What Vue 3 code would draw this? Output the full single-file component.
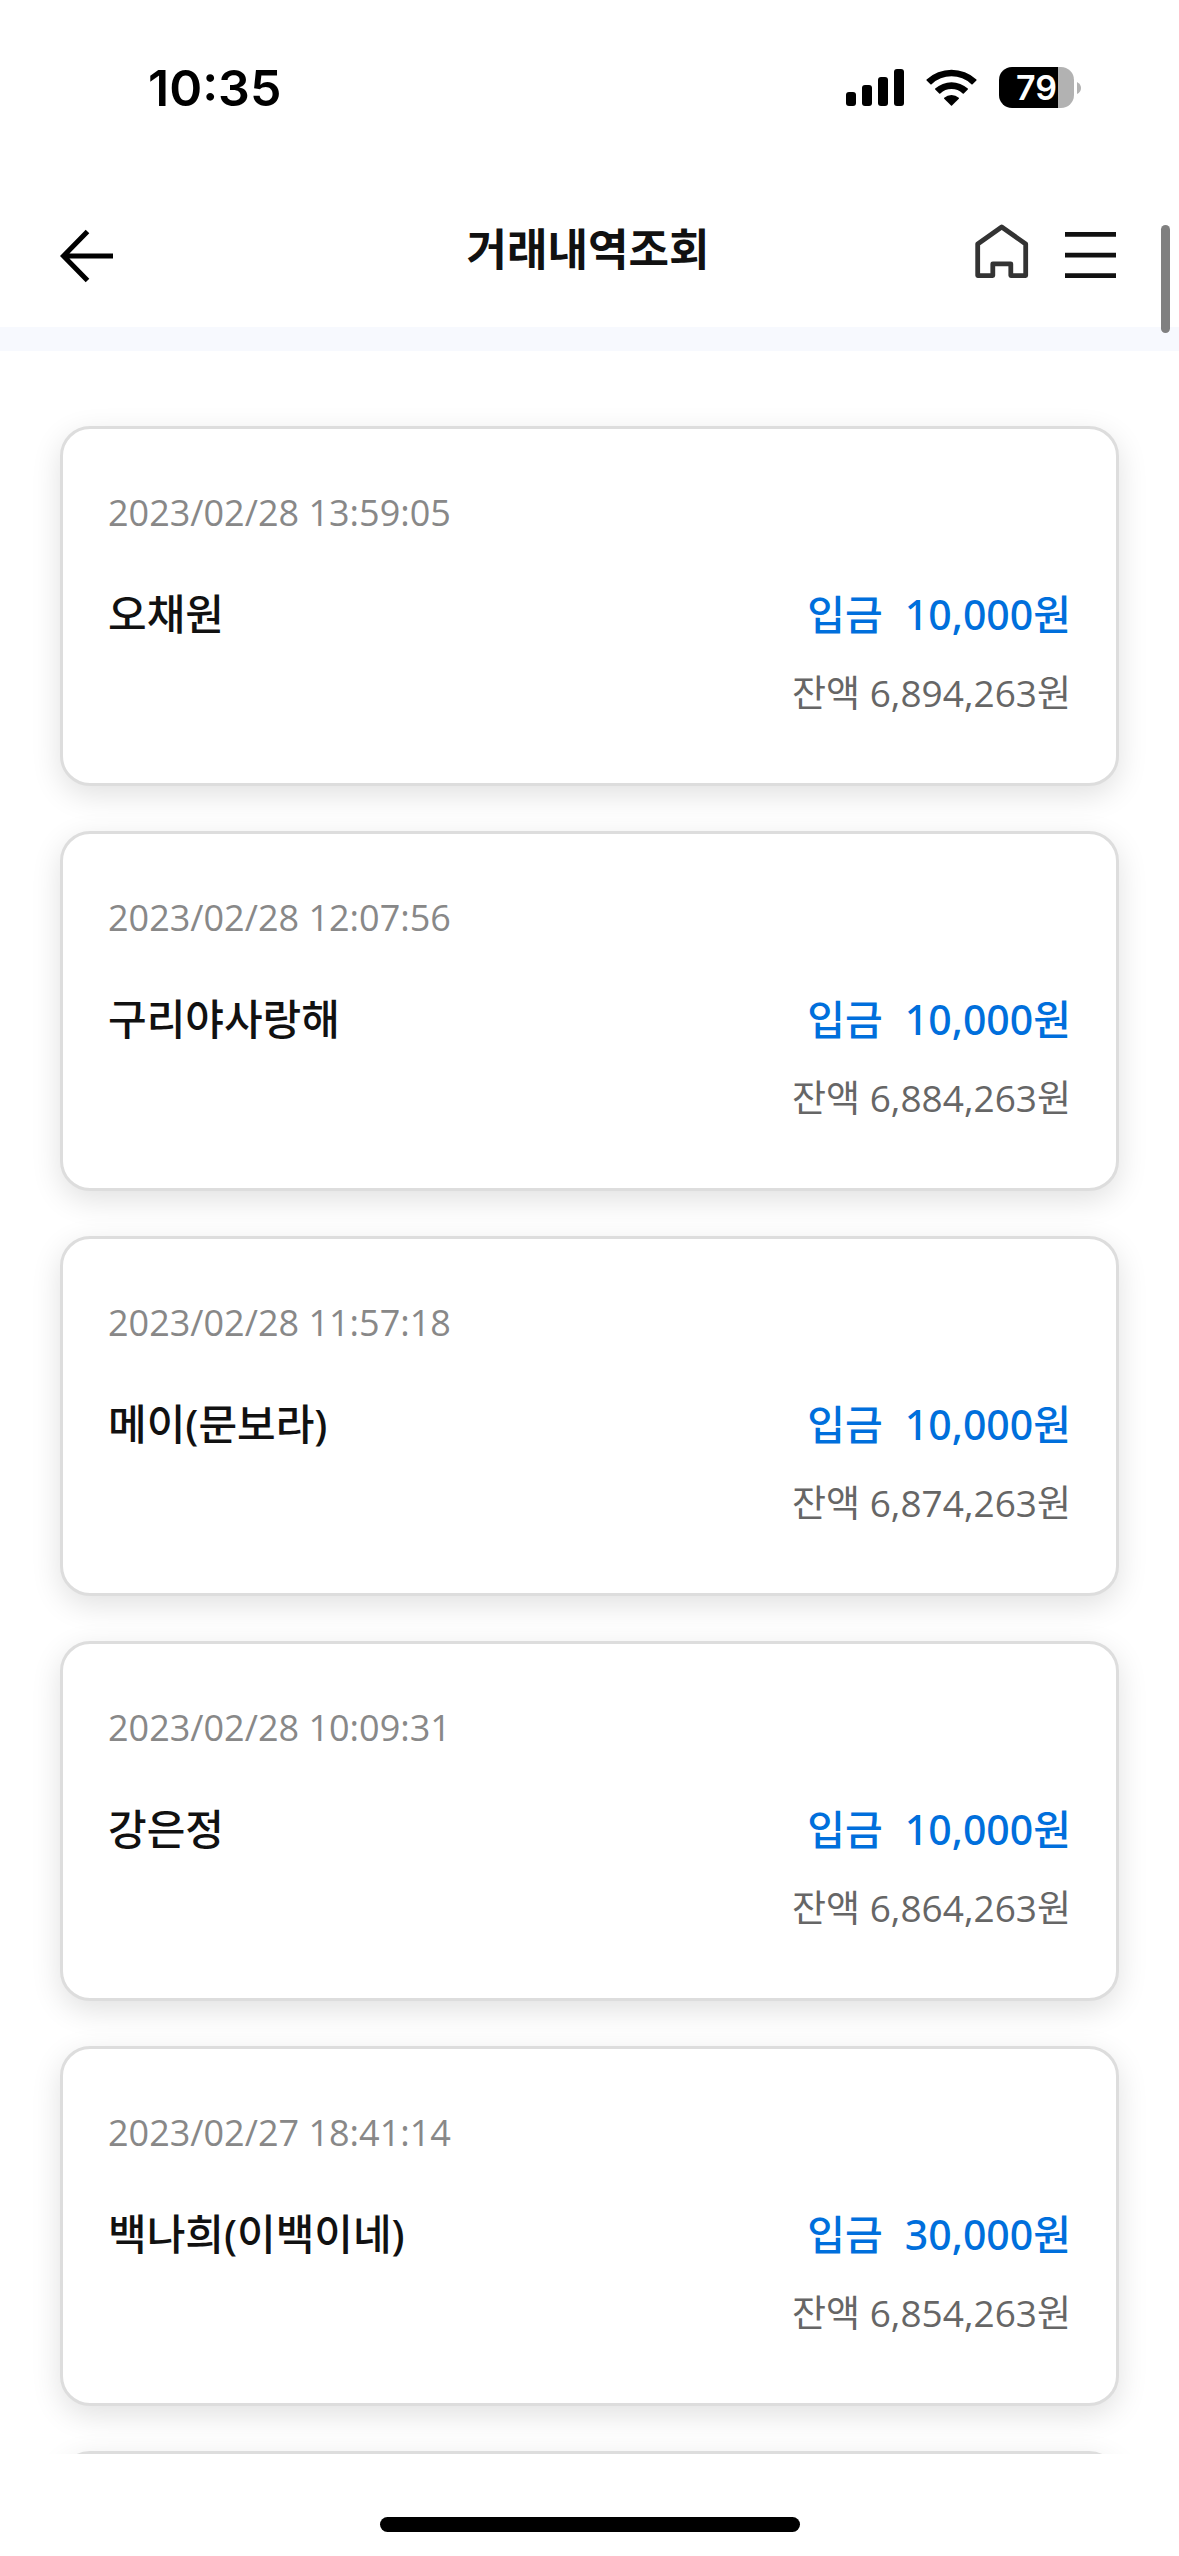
<script setup>
const transactions = [
  { date: '2023/02/28 13:59:05', name: '오채원', amount: '10,000', balance: '6,894,263' },
  { date: '2023/02/28 12:07:56', name: '구리야사랑해', amount: '10,000', balance: '6,884,263' },
  { date: '2023/02/28 11:57:18', name: '메이(문보라)', amount: '10,000', balance: '6,874,263' },
  { date: '2023/02/28 10:09:31', name: '강은정', amount: '10,000', balance: '6,864,263' },
  { date: '2023/02/27 18:41:14', name: '백나희(이백이네)', amount: '30,000', balance: '6,854,263' },
]
</script>

<template>
  <div class="screen">
    <div class="status-bar">
      <span class="clock">10:35</span>
      <div class="indicators">
        <svg class="signal" width="58" height="37" viewBox="0 0 58 37">
          <rect x="0" y="23" width="10" height="14" rx="3" />
          <rect x="16" y="16" width="10" height="21" rx="3" />
          <rect x="32" y="8" width="10" height="29" rx="3" />
          <rect x="48" y="0" width="10" height="37" rx="3" />
        </svg>
        <svg class="wifi" width="51" height="37" viewBox="0 0 51 37">
          <path d="M0.6 10.6 A36.6 36.6 0 0 1 50.4 10.6 Q50.8 11 50.4 11.4 L46.6 15.2 Q46 15.8 45.4 15.2 A29 29 0 0 0 5.6 15.2 Q5 15.8 4.4 15.2 L0.6 11.4 Q0.2 11 0.6 10.6Z" />
          <path d="M9.2 19.6 A24.2 24.2 0 0 1 41.8 19.6 Q42.2 20 41.8 20.4 L37.8 24.4 Q37.3 24.9 36.7 24.4 A16.6 16.6 0 0 0 14.3 24.4 Q13.7 24.9 13.2 24.4 L9.2 20.4 Q8.8 20 9.2 19.6Z" />
          <path d="M18.2 28.7 A11.5 11.5 0 0 1 32.8 28.7 Q33.2 29.2 32.8 29.7 L26 36.6 Q25.5 37 25 36.6 L18.2 29.7 Q17.8 29.2 18.2 28.7Z" />
        </svg>
        <div class="battery">
          <div class="battery-body"><span class="battery-level">79</span></div>
          <svg width="4" height="12" viewBox="0 0 4 12"><path d="M0 0 Q4 2 4 6 Q4 10 0 12Z" fill="#b2b2b2" /></svg>
        </div>
      </div>
    </div>

    <header class="header">
      <button class="icon-button" type="button" aria-label="뒤로">
        <svg width="54" height="64" viewBox="0 -10 54 64" fill="none" stroke="#000" stroke-width="5">
          <path d="M27.5 2.5 L3.5 27 L27.5 51.5 M3.5 27 H53" />
        </svg>
      </button>
      <h1 class="title">거래내역조회</h1>
      <div class="actions">
        <button class="icon-button" type="button" aria-label="홈">
          <svg width="54" height="54" viewBox="0 0 54 54" fill="none" stroke="#333" stroke-width="4.8" stroke-linejoin="round">
            <path d="M2.7 20 L26.7 3 L50.7 20 V51.6 H35.8 V39.8 H17.8 V51.6 H2.7Z" />
          </svg>
        </button>
        <button class="icon-button" type="button" aria-label="메뉴">
          <svg width="51" height="54" viewBox="0 0 51 54" fill="#111">
            <path d="M0 8H51V12.7H0Z M0 28.8H51V33.5H0Z M0 49.3H51V54H0Z" />
          </svg>
        </button>
      </div>
    </header>

    <main class="content">
      <ul class="list">
        <li v-for="item in transactions" :key="item.date" class="card">
          <time class="date">{{ item.date }}</time>
          <div class="row">
            <strong class="name">{{ item.name }}</strong>
            <span class="amount"><span>입금</span><span>{{ item.amount }}원</span></span>
          </div>
          <p class="balance">잔액 {{ item.balance }}원</p>
        </li>
        <li class="card" aria-hidden="true"></li>
      </ul>
    </main>

    <div class="home-area"><div class="home-indicator"></div></div>
    <div class="scroll-thumb"></div>
  </div>
</template>

<style>
body {
  margin: 0;
  background: #fff;
}
</style>

<style scoped>
.screen {
  position: relative;
  display: flex;
  flex-direction: column;
  height: 100vh;
  overflow: hidden;
  background: #fff;
  color: #111;
  font-family: "Open Sans", "Noto Sans CJK KR", sans-serif;
}

.status-bar {
  display: flex;
  flex: none;
  align-items: center;
  justify-content: space-between;
  box-sizing: border-box;
  height: 175px;
  padding: 0 98px 0 148px;
  color: #000;
  font-family: Inter, sans-serif;
}

.clock {
  font-size: 50px;
  font-weight: 600;
  line-height: 60px;
}

.indicators {
  display: flex;
  align-items: center;
  gap: 22px;
}

.battery {
  display: flex;
  align-items: center;
  gap: 3px;
}

.battery-body {
  display: flex;
  align-items: center;
  justify-content: center;
  width: 75px;
  height: 41px;
  border-radius: 13px;
  background: linear-gradient(to right, #000 79%, #b2b2b2 79%);
}

.battery-level {
  color: #fff;
  font-size: 34px;
  font-weight: 600;
  line-height: 41px;
}

.header {
  display: grid;
  flex: none;
  grid-template-columns: 1fr auto 1fr;
  align-items: center;
  box-sizing: border-box;
  height: 176px;
  padding: 0 63px 0 60px;
  border-bottom: 24px solid #f7f9fe;
}

.icon-button {
  display: flex;
  justify-self: start;
  padding: 0;
  border: 0;
  background: none;
}

.actions {
  display: flex;
  justify-content: flex-end;
  gap: 36px;
}

.title {
  margin: 0;
  padding-bottom: 4px;
  font-size: 44px;
  font-weight: 700;
  line-height: 60px;
}

.content {
  flex: 1;
  min-height: 0;
  overflow: hidden;
}

.list {
  display: flex;
  flex-direction: column;
  gap: 45px;
  margin: 0;
  padding: 75px 60px;
  list-style: none;
}

.card {
  flex: none;
  box-sizing: border-box;
  min-height: 360px;
  padding: 57px 45px 63px;
  border: 3px solid #ddd;
  border-radius: 30px;
  background: #fff;
  box-shadow: 0 9px 30px rgba(0, 0, 0, 0.12);
}

.date {
  display: block;
  margin-bottom: 44px;
  color: #888;
  font-size: 36px;
  line-height: 54px;
}

.row {
  display: flex;
  align-items: center;
  justify-content: space-between;
  margin-bottom: 22px;
  font-family: "Noto Sans", "Noto Sans CJK KR", sans-serif;
  font-weight: 500;
  line-height: 60px;
}

.name {
  font-size: 42px;
  font-weight: 500;
}

.amount {
  display: flex;
  gap: 22px;
  color: #006fdc;
  font-size: 41px;
}

.balance {
  margin: 0;
  color: #666;
  font-size: 37px;
  line-height: 54px;
  text-align: right;
}

.home-area {
  display: flex;
  flex: none;
  align-items: flex-end;
  justify-content: center;
  box-sizing: border-box;
  height: 102px;
  padding-bottom: 24px;
}

.home-indicator {
  width: 420px;
  height: 15px;
  border-radius: 8px;
  background: #000;
}

.scroll-thumb {
  position: absolute;
  top: 225px;
  right: 9px;
  width: 9px;
  height: 108px;
  border-radius: 5px;
  background: #808080;
}
</style>
